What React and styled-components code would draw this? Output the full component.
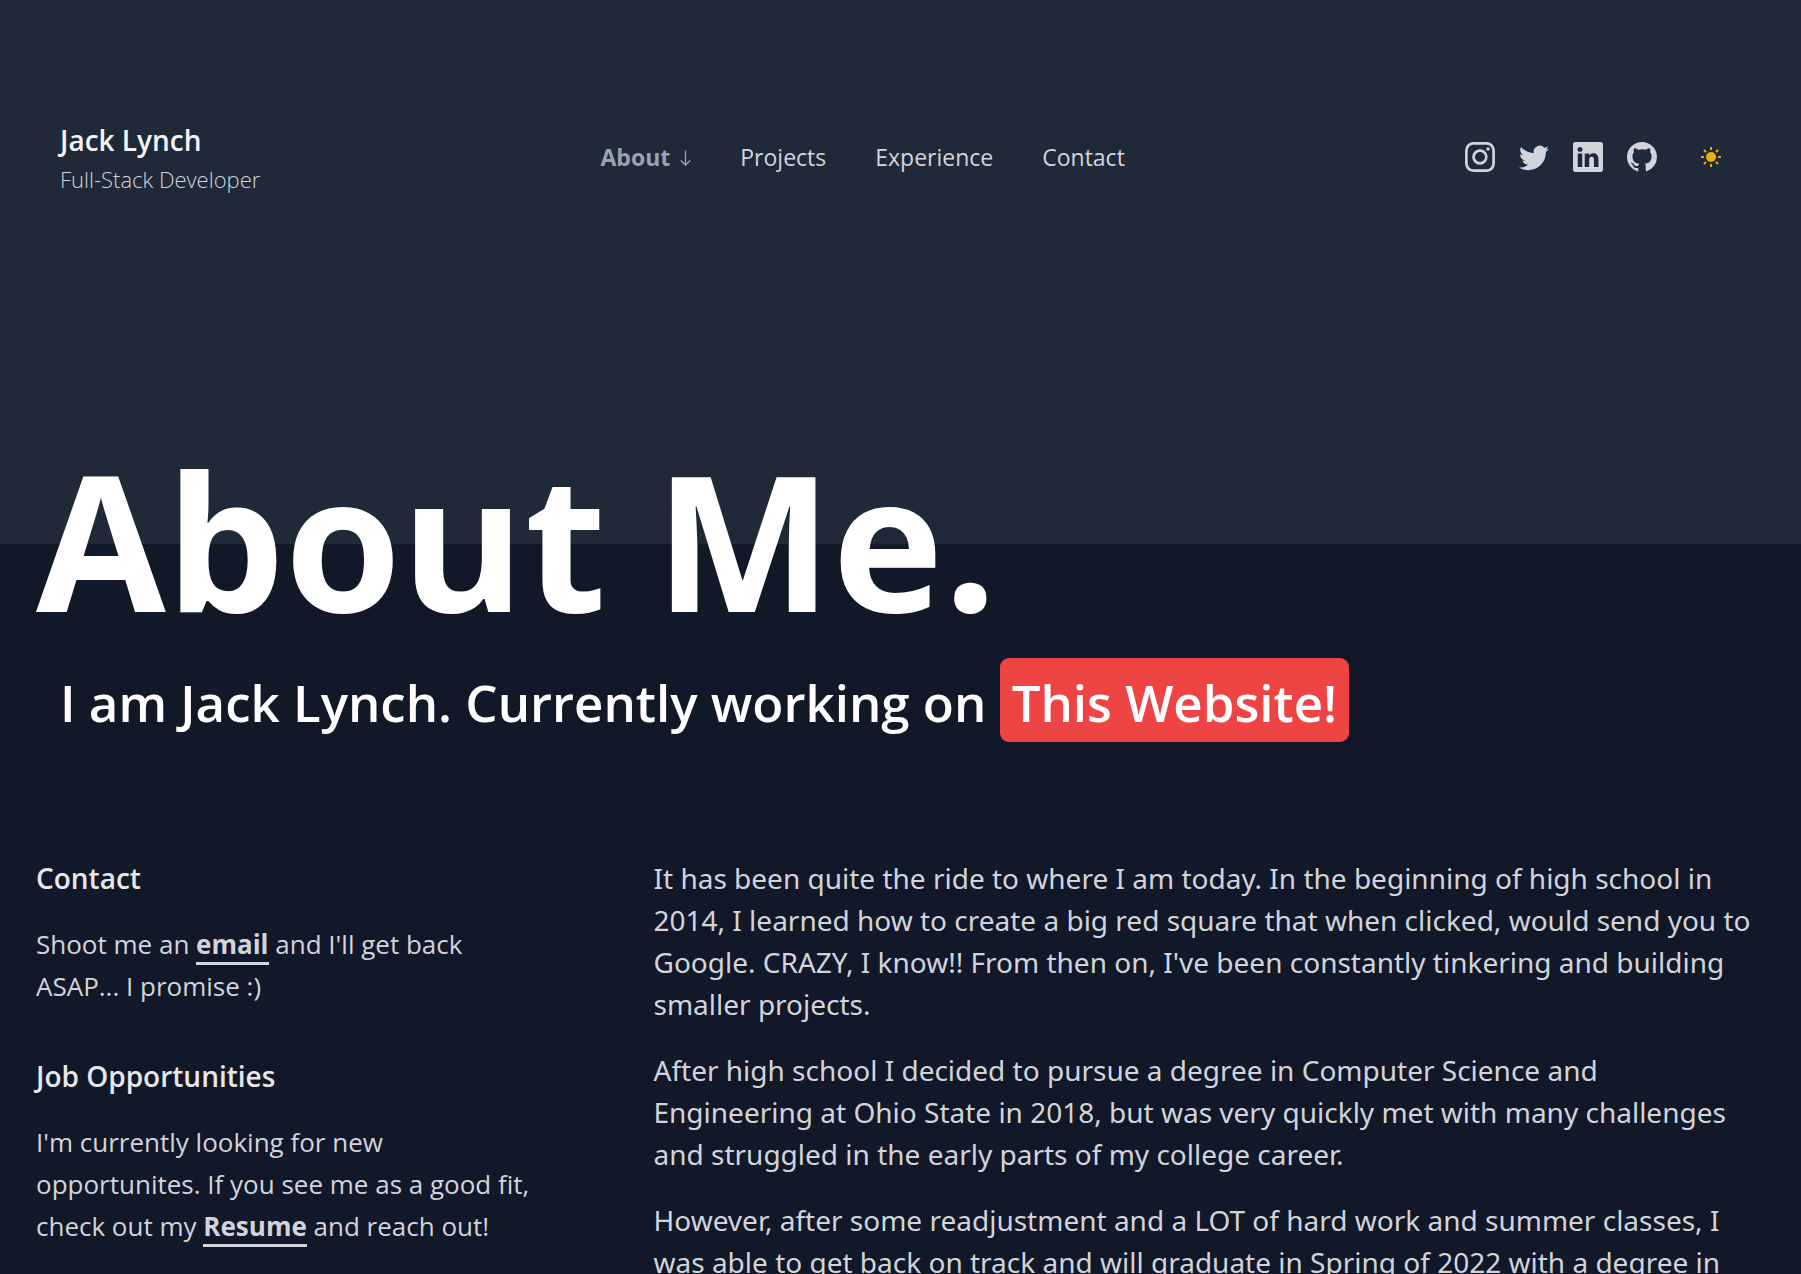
import React from "react";
import styled, { createGlobalStyle } from "styled-components";
import { BsInstagram, BsTwitter, BsLinkedin, BsGithub } from "react-icons/bs";

const GlobalStyle = createGlobalStyle`
  *, *::before, *::after { box-sizing: border-box; }
  body {
    margin: 0;
    background: #111827;
    color: #d1d5db;
    font-family: "Segoe UI", "Open Sans", "Noto Sans", sans-serif;
  }
  h1, h2, h3, p { margin: 0; }
  a { color: inherit; text-decoration: none; }
`;

const Page = styled.div`
  height: 100vh;
  overflow-y: auto;
  scrollbar-width: none;
  background: #111827;
`;

const Hero = styled.header`
  height: 544px;
  padding: 118px 60px 0;
  background: #1f2937;
`;

const Bar = styled.div`
  display: flex;
  align-items: center;
  justify-content: space-between;
`;

const Brand = styled.a`
  display: flex;
  flex-direction: column;
`;

const BrandName = styled.span`
  color: #f3f4f6;
  font-size: 28px;
  font-weight: 600;
  line-height: 44px;
`;

const BrandRole = styled.span`
  font-size: 22px;
  font-weight: 300;
  line-height: 34px;
`;

const Nav = styled.nav`
  display: flex;
  align-items: center;
  gap: 49px;
`;

const NavLink = styled.a`
  display: flex;
  align-items: center;
  gap: 10px;
  font-size: 23px;
  line-height: 34px;
  font-weight: ${(p) => (p.$active ? 700 : 400)};
  color: ${(p) => (p.$active ? "#9ca3af" : "#d1d5db")};
`;

const Tools = styled.div`
  display: flex;
  align-items: center;
  justify-content: flex-end;
  gap: 24px;
`;

const IconLink = styled.a`
  display: flex;
  font-size: 30px;
`;

const ThemeButton = styled.button`
  display: flex;
  padding: 20px;
  border: 0;
  background: transparent;
  color: #eab308;
  cursor: pointer;
`;

const Main = styled.main`
  padding: 0 36px 48px;
`;

const Title = styled.h1`
  margin-top: -101px;
  color: #fff;
  font-size: 188px;
  font-weight: 700;
  line-height: 192px;
`;

const Subtitle = styled.h2`
  margin: 23px 24px 0;
  color: #fff;
  font-size: 51px;
  font-weight: 600;
  line-height: 84px;
`;

const Badge = styled.a`
  display: inline-block;
  padding: 8px 12px 4px;
  border-radius: 9px;
  background: #ef4444;
  line-height: 72px;
`;

const Columns = styled.div`
  display: grid;
  grid-template-columns: 5fr 9fr;
  margin-top: 113px;
`;

const Aside = styled.aside`
  display: flex;
  flex-direction: column;
  gap: 48px;
  padding-right: 116px;
`;

const Section = styled.section`
  display: flex;
  flex-direction: column;
  gap: 24px;
`;

const Story = styled(Section)`
  padding-right: 8px;
`;

const SectionTitle = styled.h3`
  color: #e5e7eb;
  font-size: 28px;
  font-weight: 600;
  line-height: 42px;
`;

const Text = styled.p`
  font-size: 26px;
  line-height: 42px;
`;

const StoryText = styled(Text)`
  font-family: "Segoe UI", "Noto Sans", "Open Sans", sans-serif;
  font-size: 28px;
`;

const TextLink = styled.a`
  border-bottom: 3px solid #d1d5db;
  font-weight: 700;
`;

const SOCIALS = [
  { label: "Instagram", Icon: BsInstagram },
  { label: "Twitter", Icon: BsTwitter },
  { label: "LinkedIn", Icon: BsLinkedin },
  { label: "GitHub", Icon: BsGithub },
];

const STORY = [
  "It has been quite the ride to where I am today. In the beginning of high school in 2014, I learned how to create a big red square that when clicked, would send you to Google. CRAZY, I know!! From then on, I've been constantly tinkering and building smaller projects.",
  "After high school I decided to pursue a degree in Computer Science and Engineering at Ohio State in 2018, but was very quickly met with many challenges and struggled in the early parts of my college career.",
  "However, after some readjustment and a LOT of hard work and summer classes, I was able to get back on track and will graduate in Spring of 2022 with a degree in",
];

function DownArrow() {
  return (
    <svg width="11" height="17" viewBox="0 0 11 17" fill="none" stroke="currentColor" strokeWidth="1.3" aria-hidden="true">
      <path d="M5.5 1.5V16M0.8 11.5L5.5 16L10.2 11.5" />
    </svg>
  );
}

function Sun() {
  return (
    <svg width="20" height="20" viewBox="0 0 20 20" fill="currentColor" aria-hidden="true">
      <circle cx="10" cy="10" r="5" />
      {[0, 45, 90, 135, 180, 225, 270, 315].map((angle) => (
        <rect key={angle} x="9" y="0" width="2" height="3" rx="0.5" transform={`rotate(${angle} 10 10)`} />
      ))}
    </svg>
  );
}

export default function App() {
  return (
    <>
      <GlobalStyle />
      <Page>
        <Hero>
          <Bar>
            <Brand href="#home">
              <BrandName>Jack Lynch</BrandName>
              <BrandRole>Full-Stack Developer</BrandRole>
            </Brand>
            <Nav>
              <NavLink href="#about" $active>
                About <DownArrow />
              </NavLink>
              <NavLink href="#projects">Projects</NavLink>
              <NavLink href="#experience">Experience</NavLink>
              <NavLink href="#contact">Contact</NavLink>
            </Nav>
            <Tools>
              {SOCIALS.map(({ label, Icon }) => (
                <IconLink key={label} href={`#${label.toLowerCase()}`} aria-label={label}>
                  <Icon />
                </IconLink>
              ))}
              <ThemeButton type="button" aria-label="Toggle theme">
                <Sun />
              </ThemeButton>
            </Tools>
          </Bar>
        </Hero>
        <Main>
          <Title>About Me.</Title>
          <Subtitle>
            I am Jack Lynch. Currently working on <Badge href="#website">This Website!</Badge>
          </Subtitle>
          <Columns>
            <Aside>
              <Section>
                <SectionTitle>Contact</SectionTitle>
                <Text>
                  Shoot me an <TextLink href="#email">email</TextLink> and I'll get back ASAP... I promise :)
                </Text>
              </Section>
              <Section>
                <SectionTitle>Job Opportunities</SectionTitle>
                <Text>
                  I'm currently looking for new opportunites. If you see me as a good fit, check out my{" "}
                  <TextLink href="#resume">Resume</TextLink> and reach out!
                </Text>
              </Section>
            </Aside>
            <Story>
              {STORY.map((paragraph) => (
                <StoryText key={paragraph}>{paragraph}</StoryText>
              ))}
            </Story>
          </Columns>
        </Main>
      </Page>
    </>
  );
}
